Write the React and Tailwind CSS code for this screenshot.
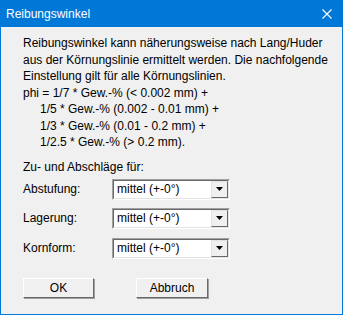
const FONT = { fontFamily: '"Liberation Sans", Arial, sans-serif' }

function Combo({ value }) {
  return (
    <div className="flex h-[21px] w-[118px] border border-t-[#a0a0a0] border-l-[#a0a0a0] border-r-white border-b-white">
      <div className="flex flex-1 border border-t-[#696969] border-l-[#696969] border-r-[#e3e3e3] border-b-[#e3e3e3] bg-white">
        <div className="flex-1 pl-[3px] text-[12px] leading-[17px] text-black">{value}</div>
        <div className="flex w-[17px] items-center justify-center border border-t-[#e3e3e3] border-l-[#e3e3e3] border-r-[#696969] border-b-[#696969] bg-[#f0f0f0]">
          <svg width="7" height="4" viewBox="0 0 7 4">
            <path d="M0 0h7L3.5 4z" fill="#000" />
          </svg>
        </div>
      </div>
    </div>
  )
}

function Button({ children, wide }) {
  return (
    <button className={`h-[20px] ${wide ? 'w-[72px]' : 'w-[71px]'} border border-t-white border-l-white border-r-[#696969] border-b-[#696969] shadow-[1px_1px_0_#a0a0a0] bg-[#f0f0f0] text-[12px] leading-[16px] text-black`}>
      {children}
    </button>
  )
}

const ROWS = [
  { label: 'Abstufung:', gap: '' },
  { label: 'Lagerung:', gap: 'mt-[8px]' },
  { label: 'Kornform:', gap: 'mt-[9px]' },
]

export default function App() {
  return (
    <div className="flex h-[315px] w-[343px] flex-col border border-[#0078d7] bg-[#f0f0f0]" style={FONT}>
      {/* Titelleiste */}
      <div className="flex h-[26px] shrink-0 items-center justify-between bg-[#0078d7] pl-[5px] pr-[10px]">
        <span className="text-[12px] text-white">Reibungswinkel</span>
        <svg width="10" height="10" viewBox="0 0 10 10">
          <path d="M0.5 0.5l9 9M9.5 0.5l-9 9" stroke="#fff" strokeWidth="1.1" />
        </svg>
      </div>

      <div className="flex flex-col pl-[22px] pt-[8px] text-[12px] text-black">
        <div className="leading-[16.5px]">
          <div>Reibungswinkel kann näherungsweise nach Lang/Huder</div>
          <div>aus der Körnungslinie ermittelt werden. Die nachfolgende</div>
          <div>Einstellung gilt für alle Körnungslinien.</div>
          <div>phi = 1/7 * Gew.-% (&lt; 0.002 mm) +</div>
          <div className="pl-[17px]">1/5 * Gew.-% (0.002 - 0.01 mm) +</div>
          <div className="pl-[17px]">1/3 * Gew.-% (0.01 - 0.2 mm) +</div>
          <div className="pl-[17px]">1/2.5 * Gew.-% (&gt; 0.2 mm).</div>
        </div>

        <div className="mt-[8px] leading-[16px]">Zu- und Abschläge für:</div>

        <div className="mt-[4px] flex flex-col">
          {ROWS.map(r => (
            <div key={r.label} className={`flex items-center ${r.gap}`}>
              <div className="w-[89px]">{r.label}</div>
              <Combo value="mittel (+-0°)" />
            </div>
          ))}
        </div>

        <div className="mt-[19px] flex gap-[42px]">
          <Button>OK</Button>
          <Button wide>Abbruch</Button>
        </div>
      </div>
    </div>
  )
}
